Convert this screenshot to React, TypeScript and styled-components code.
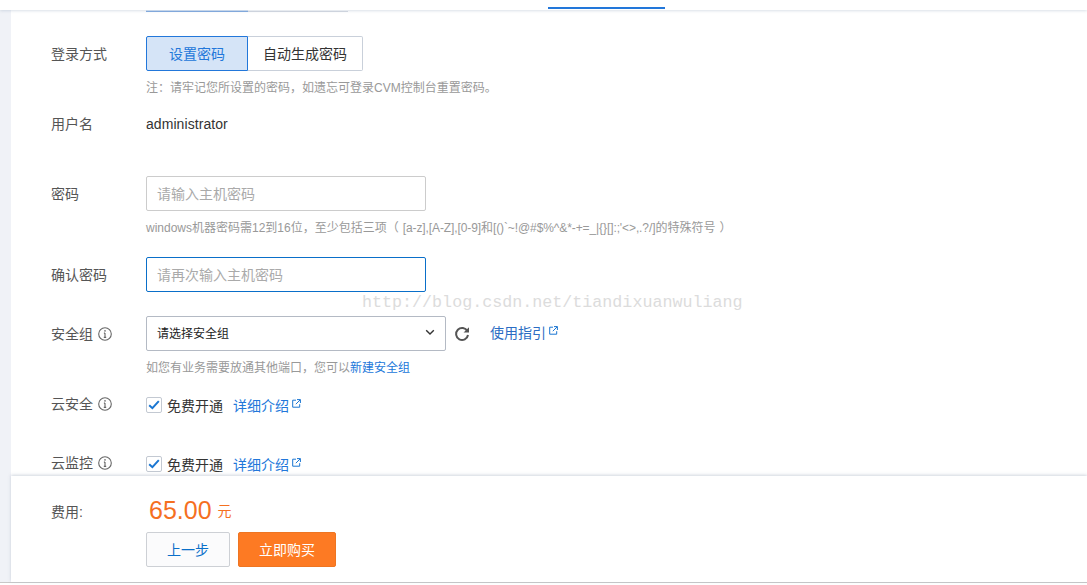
import React from "react";
import styled, { createGlobalStyle } from "styled-components";

const Global = createGlobalStyle`
  html, body { margin: 0; padding: 0; background: #fff; }
  body { font-family: "Liberation Sans", "Noto Sans CJK SC", sans-serif; font-size: 14px; color: #333; }
  * { box-sizing: border-box; }
`;

const Page = styled.div`
  position: relative;
  width: 1087px;
  height: 585px;
  overflow: hidden;
  display: flex;
  flex-direction: column;
  background: #fff;
`;
const TopBar = styled.div`
  position: relative;
  z-index: 2;
  height: 10px;
  flex: none;
  background: #fff;
  box-shadow: 0 1px 3px rgba(150, 165, 185, 0.35);
  padding: 7px 0 0 548px;
`;
const ActiveTab = styled.div`
  width: 117px;
  height: 2px;
  background: #2277da;
`;
const Body = styled.div`
  flex: 1;
  min-height: 0;
  display: flex;
`;
const Strip = styled.div`
  width: 11px;
  flex: none;
  background: #f0f2f7;
`;
const Main = styled.div`
  flex: 1;
  min-width: 0;
  display: flex;
  flex-direction: column;
`;
const Form = styled.div`
  height: 466px;
  flex: none;
  overflow: hidden;
  padding-left: 40px;
`;
const Stub = styled.div`
  display: flex;
  height: 2px;
  margin-left: 95px;
`;
const StubCell = styled.div<{ $active?: boolean }>`
  width: ${(p) => (p.$active ? "102px" : "100px")};
  border-bottom: 1px solid ${(p) => (p.$active ? "#7fa9e0" : "#d5dae2")};
  background: ${(p) => (p.$active ? "#d5e4f7" : "#fff")};
`;
const Row = styled.div<{ $top: number }>`
  display: flex;
  align-items: flex-start;
  margin-top: ${(p) => p.$top}px;
`;
const Label = styled.div<{ $offset?: number }>`
  width: 95px;
  flex: none;
  color: #555;
  font-size: 14px;
  line-height: 20px;
  margin-top: ${(p) => p.$offset ?? 0}px;
  display: flex;
  align-items: center;
  gap: 5px;
`;
const Column = styled.div`
  display: flex;
  flex-direction: column;
  align-items: flex-start;
`;
const Segmented = styled.div`
  display: flex;
  height: 35px;
`;
const Seg = styled.div<{ $active?: boolean }>`
  height: 35px;
  padding-bottom: 2px;
  display: flex;
  align-items: center;
  justify-content: center;
  font-size: 14px;
  width: ${(p) => (p.$active ? "102px" : "115px")};
  color: ${(p) => (p.$active ? "#2277da" : "#333")};
  background: ${(p) => (p.$active ? "#d5e4f7" : "#fff")};
  border: 1px solid ${(p) => (p.$active ? "#2277da" : "#c9d0da")};
  border-left-width: ${(p) => (p.$active ? "1px" : "0")};
  border-radius: ${(p) => (p.$active ? "2px 0 0 2px" : "0 2px 2px 0")};
`;
const Hint = styled.div<{ $top: number }>`
  margin-top: ${(p) => p.$top}px;
  font-size: 12px;
  line-height: 16px;
  color: #999;
  white-space: nowrap;
`;
const OpenParen = styled.span`
  margin-right: 4px;
`;
const CloseParen = styled.span`
  margin-left: 4px;
`;
const Symbols = styled.span`
  letter-spacing: -0.1px;
`;
const Value = styled.div`
  font-size: 14px;
  line-height: 20px;
  letter-spacing: 0.07px;
  color: #333;
`;
const Field = styled.div<{ $focus?: boolean }>`
  width: 280px;
  height: 35px;
  padding: 0 10px 2px;
  display: flex;
  align-items: center;
  font-size: 14px;
  color: #aaa;
  border: 1px solid ${(p) => (p.$focus ? "#0a6fc9" : "#ccc")};
  border-radius: 2px;
`;
const SelectBox = styled.div`
  width: 300px;
  height: 35px;
  padding: 0 10px 2px;
  display: flex;
  align-items: center;
  justify-content: space-between;
  font-size: 12px;
  color: #222;
  border: 1px solid #b4bac4;
  border-radius: 2px;
`;
const Inline = styled.div`
  display: flex;
  align-items: center;
`;
const Refresh = styled.span`
  display: flex;
  margin-left: 8px;
  color: #555;
`;
const Guide = styled.a`
  margin-left: 20px;
  margin-top: -3px;
  color: #2b6dc4;
  font-size: 14px;
  display: flex;
  align-items: flex-start;
`;
const Link = styled.a`
  color: #2277da;
`;
const CheckLine = styled.div`
  display: flex;
  align-items: center;
  font-size: 14px;
  color: #333;
`;
const CheckBox = styled.span`
  width: 16px;
  height: 16px;
  border: 1px solid #c3c9d2;
  border-radius: 2px;
  display: flex;
  align-items: center;
  justify-content: center;
  margin-right: 5px;
`;
const Detail = styled.a`
  margin-left: 10px;
  color: #2277da;
  display: flex;
  align-items: flex-start;
`;
const Footer = styled.div`
  position: relative;
  height: 106px;
  flex: none;
  background: #fff;
  box-shadow: 0 -1px 3px rgba(150, 165, 185, 0.45);
  padding: 18px 0 0 40px;
`;
const PriceRow = styled.div`
  display: flex;
  align-items: flex-start;
  height: 30px;
`;
const FeeLabel = styled.div`
  width: 98px;
  flex: none;
  color: #555;
  font-size: 14px;
  line-height: 20px;
  margin-top: 8px;
`;
const Price = styled.div`
  font-size: 25px;
  line-height: 30px;
  margin-top: 1px;
  color: #f5701f;
`;
const Unit = styled.div`
  margin: 7px 0 0 6px;
  font-size: 14px;
  line-height: 20px;
  color: #f5701f;
`;
const Actions = styled.div`
  display: flex;
  gap: 8px;
  margin: 8px 0 0 95px;
`;
const Button = styled.button<{ $primary?: boolean }>`
  height: 35px;
  padding: 0 0 2px;
  font: inherit;
  font-size: 14px;
  border-radius: 2px;
  width: ${(p) => (p.$primary ? "98px" : "84px")};
  color: ${(p) => (p.$primary ? "#fff" : "#0a6fc9")};
  background: ${(p) => (p.$primary ? "#fd7a23" : "#fbfbfc")};
  border: 1px solid ${(p) => (p.$primary ? "#ee7522" : "#cdd0d5")};
`;
const BottomEdge = styled.div`
  height: 3px;
  flex: none;
  background: #fff;
  border-top: 1px solid #c8c8c8;
`;
const Watermark = styled.div`
  position: absolute;
  left: 362px;
  top: 293px;
  z-index: 3;
  font-family: "Liberation Mono", monospace;
  font-size: 16.7px;
  line-height: 20px;
  color: #dcdcdc;
  white-space: nowrap;
`;

const InfoIcon = () => (
  <svg width="14" height="14" viewBox="0 0 14 14" fill="none" stroke="#666">
    <circle cx="7" cy="7" r="6.3" strokeWidth="1.1" />
    <path d="M7 6v4.2M5.8 10.4h2.4M5.9 6.1H7" strokeWidth="1.1" />
    <circle cx="7" cy="3.9" r="0.8" fill="#666" stroke="none" />
  </svg>
);
const OutIcon = () => (
  <svg width="9" height="9" viewBox="0 0 9 9" fill="none" stroke="#1a76d2" strokeWidth="1" style={{ marginLeft: 3, marginTop: 4 }}>
    <path d="M4 1.2H.7v7h7V5.2" />
    <path d="M5 .6h3.4V4M8.2.8 3.8 5.2" />
  </svg>
);
const Tick = () => (
  <svg width="12" height="10" viewBox="0 0 12 10" fill="none" stroke="#1a76d2" strokeWidth="2">
    <path d="M1.2 5.2 4.4 8.2 10.8 1.2" />
  </svg>
);
const Chevron = () => (
  <svg width="10" height="7" viewBox="0 0 10 7" fill="none" stroke="#333" strokeWidth="1.4">
    <path d="M1.2 1.2 5 5 8.8 1.2" />
  </svg>
);
const RefreshIcon = () => (
  <svg width="16" height="16" viewBox="0 0 16 16" fill="none" stroke="#555" strokeWidth="2">
    <path d="M13.4 5.2A6 6 0 1 0 14 9" />
    <path d="M15 1.2v5.4H9.6z" fill="#555" stroke="none" />
  </svg>
);

const SYMBOLS = "[a-z],[A-Z],[0-9]和[()`~!@#$%^&*-+=_|{}[]:;'<>,.?/]";

export default function App() {
  return (
    <Page>
      <Global />
      <TopBar><ActiveTab /></TopBar>
      <Body>
        <Strip />
        <Main>
          <Form>
            <Stub><StubCell $active /><StubCell /></Stub>
            <Row $top={24}>
              <Label $offset={8}>登录方式</Label>
              <Column>
                <Segmented>
                  <Seg $active>设置密码</Seg>
                  <Seg>自动生成密码</Seg>
                </Segmented>
                <Hint $top={9}>注：请牢记您所设置的密码，如遗忘可登录CVM控制台重置密码。</Hint>
              </Column>
            </Row>
            <Row $top={18}>
              <Label>用户名</Label>
              <Value>administrator</Value>
            </Row>
            <Row $top={42}>
              <Label $offset={8}>密码</Label>
              <Column>
                <Field>请输入主机密码</Field>
                <Hint $top={9}>windows机器密码需12到16位，至少包括三项<OpenParen>（</OpenParen><Symbols>{SYMBOLS}</Symbols>的特殊符号<CloseParen>）</CloseParen></Hint>
              </Column>
            </Row>
            <Row $top={21}>
              <Label $offset={8}>确认密码</Label>
              <Field $focus>请再次输入主机密码</Field>
            </Row>
            <Row $top={24}>
              <Label $offset={8}>安全组<InfoIcon /></Label>
              <Column>
                <Inline>
                  <SelectBox>请选择安全组<Chevron /></SelectBox>
                  <Refresh><RefreshIcon /></Refresh>
                  <Guide>使用指引<OutIcon /></Guide>
                </Inline>
                <Hint $top={9}>如您有业务需要放通其他端口，您可以<Link>新建安全组</Link></Hint>
              </Column>
            </Row>
            <Row $top={19}>
              <Label $offset={-1}>云安全<InfoIcon /></Label>
              <CheckLine><CheckBox><Tick /></CheckBox>免费开通<Detail>详细介绍<OutIcon /></Detail></CheckLine>
            </Row>
            <Row $top={39}>
              <Label $offset={-1}>云监控<InfoIcon /></Label>
              <CheckLine><CheckBox><Tick /></CheckBox>免费开通<Detail>详细介绍<OutIcon /></Detail></CheckLine>
            </Row>
          </Form>
          <Footer>
            <PriceRow>
              <FeeLabel>费用:</FeeLabel>
              <Price>65.00</Price>
              <Unit>元</Unit>
            </PriceRow>
            <Actions>
              <Button>上一步</Button>
              <Button $primary>立即购买</Button>
            </Actions>
          </Footer>
        </Main>
      </Body>
      <BottomEdge />
      <Watermark>http://blog.csdn.net/tiandixuanwuliang</Watermark>
    </Page>
  );
}
